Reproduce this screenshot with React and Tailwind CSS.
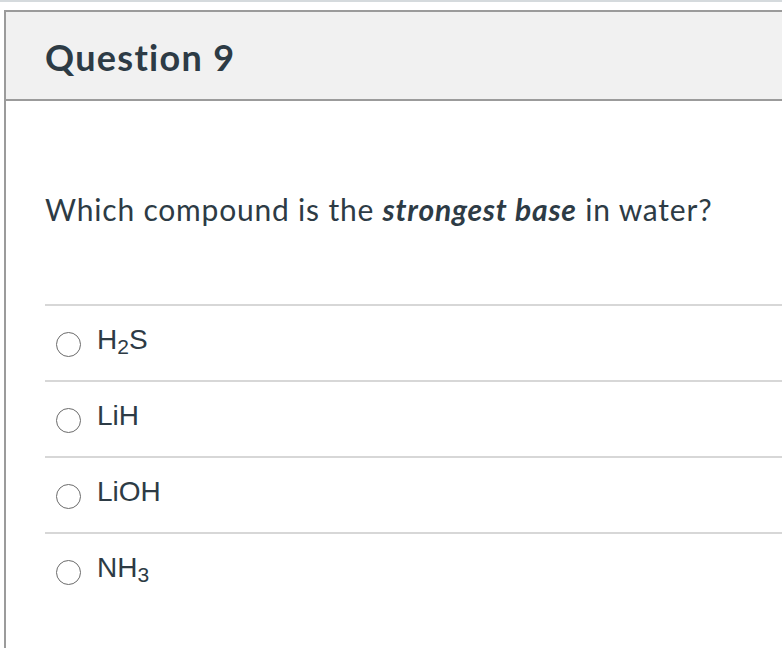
import React from "react";

const answers = [
  { id: "a1", label: <>H<sub className="text-[21px]">2</sub>S</> },
  { id: "a2", label: "LiH" },
  { id: "a3", label: "LiOH" },
  { id: "a4", label: <>NH<sub className="text-[21px]">3</sub></> },
];

export default function App() {
  return (
    <div className="h-[648px] w-[782px] overflow-hidden bg-white">
      <div className="h-[2px] bg-[#d5dadd]" />
      <div className="mt-[8px] ml-[4px] w-[820px] h-[700px] border-l-2 border-t-2 border-[#9b9b9b]">
        {/* header */}
        <div className="bg-[#f1f1f1] border-b-2 border-[#9b9b9b] pl-[39px] pt-[23px] pb-[20px]">
          <h2 className="font-['Lato',sans-serif] font-bold text-[36px] leading-[44px] tracking-[1.3px] text-[#2d3b45]">
            Question 9
          </h2>
        </div>

        {/* body */}
        <div className="pl-[39px] pt-[90px]">
          <p className="font-['Lato',sans-serif] text-[30px] leading-[36px] tracking-[0.8px] text-[#2d3b45]">
            Which compound is the <strong className="font-bold italic">strongest base</strong> in water?
          </p>

          <div className="mt-[77px]">
            {answers.map((a) => (
              <label
                key={a.id}
                className="flex items-start border-t-2 border-[#d7d7d7] pt-[18px] pb-[24px] h-[76px]"
              >
                <span className="ml-[11px] mt-[8px] w-[25px] h-[25px] rounded-full border-[1.5px] border-[#6b6b6b] shrink-0" />
                <span className="ml-[16px] font-['Liberation_Sans',Arial,sans-serif] text-[28px] leading-[32px] text-[#2d3b45]">
                  {a.label}
                </span>
              </label>
            ))}
          </div>
        </div>
      </div>
    </div>
  );
}
